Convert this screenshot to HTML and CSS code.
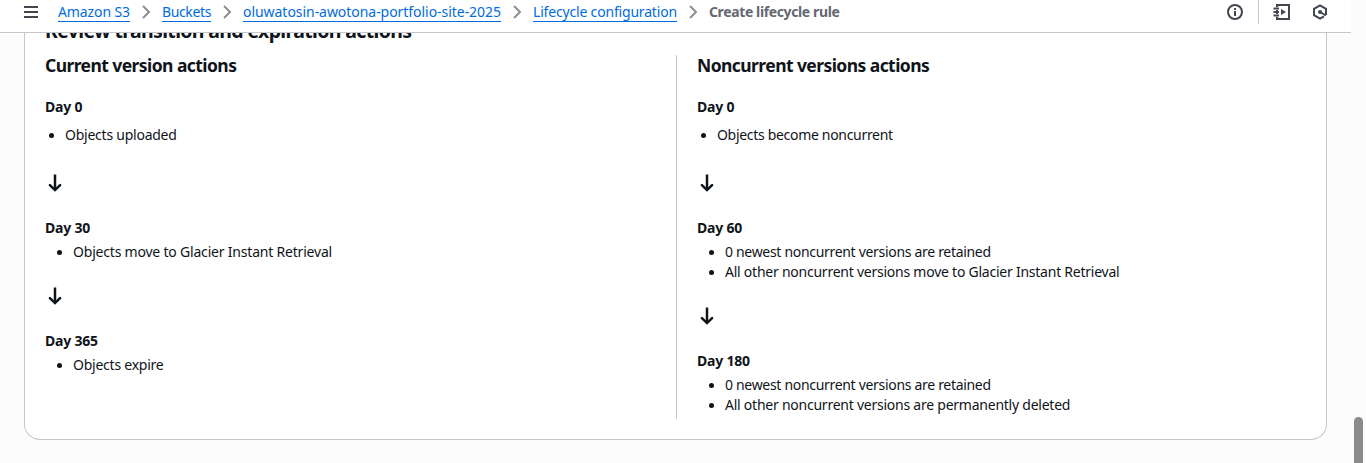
FILE: index.html
```html
<!DOCTYPE html>
<html lang="en">
<head>
<meta charset="utf-8">
<title>Create lifecycle rule</title>
<link rel="stylesheet" href="styles.css">
</head>
<body>
<header class="topbar">
  <svg class="menu" width="16" height="16" viewBox="0 0 16 16"><path d="M1 3h14M1 8h14M1 13h14"/></svg>
  <nav class="crumbs">
    <a class="c1">Amazon S3</a>
    <svg class="chev" width="16" height="16" viewBox="0 0 16 16"><path d="M5 2l6 6-6 6"/></svg>
    <a class="c2">Buckets</a>
    <svg class="chev" width="16" height="16" viewBox="0 0 16 16"><path d="M5 2l6 6-6 6"/></svg>
    <a class="c3">oluwatosin-awotona-portfolio-site-2025</a>
    <svg class="chev" width="16" height="16" viewBox="0 0 16 16"><path d="M5 2l6 6-6 6"/></svg>
    <a class="c4">Lifecycle configuration</a>
    <svg class="chev" width="16" height="16" viewBox="0 0 16 16"><path d="M5 2l6 6-6 6"/></svg>
    <span class="current">Create lifecycle rule</span>
  </nav>
  <div class="tools">
    <svg class="tool" width="16" height="16" viewBox="0 0 16 16"><circle cx="8" cy="8" r="7"/><path d="M8 7v5M8 4v2"/></svg>
    <span class="rule"></span>
    <svg class="tool tutorial" width="18" height="16" viewBox="0 0 18 16"><path d="M4 3V1h12v14H4v-2M4 6v4M0.500 4.500h5.500M0.500 8h5.500M0.500 11.500h5.500"/><path class="solid" d="M8 5v6l5-3z"/></svg>
    <svg class="tool" width="16" height="16" viewBox="0 0 16 16"><path d="M14 11V4.800L8 1.300 2 4.800v6.400L8 14.700l4-2.300M8 8l6 3.500"/><circle class="solid" cx="8" cy="8" r="2"/></svg>
  </div>
</header>
<div class="view">
<main class="main">
  <section class="card">
    <h2 class="title">Review transition and expiration actions</h2>
    <div class="columns">
      <div class="col">
        <h3 class="heading">Current version actions</h3>
        <h4 class="day">Day 0</h4>
        <ul class="list near"><li>Objects uploaded</li></ul>
        <svg class="arrow first" width="20" height="20" viewBox="0 0 20 20"><path d="M10 1.500v15.500"/><path class="head" d="M4.900 12.100L10 17.100l5.100-5"/></svg>
        <h4 class="day">Day 30</h4>
        <ul class="list"><li class="wide">Objects move to Glacier Instant Retrieval</li></ul>
        <svg class="arrow" width="20" height="20" viewBox="0 0 20 20"><path d="M10 1.500v15.500"/><path class="head" d="M4.900 12.100L10 17.100l5.100-5"/></svg>
        <h4 class="day">Day 365</h4>
        <ul class="list"><li>Objects expire</li></ul>
      </div>
      <div class="col">
        <h3 class="heading">Noncurrent versions actions</h3>
        <h4 class="day">Day 0</h4>
        <ul class="list near"><li class="tight">Objects become noncurrent</li></ul>
        <svg class="arrow first" width="20" height="20" viewBox="0 0 20 20"><path d="M10 1.500v15.500"/><path class="head" d="M4.900 12.100L10 17.100l5.100-5"/></svg>
        <h4 class="day">Day 60</h4>
        <ul class="list"><li class="tight">0 newest noncurrent versions are retained</li><li>All other noncurrent versions move to Glacier Instant Retrieval</li></ul>
        <svg class="arrow" width="20" height="20" viewBox="0 0 20 20"><path d="M10 1.500v15.500"/><path class="head" d="M4.900 12.100L10 17.100l5.100-5"/></svg>
        <h4 class="day">Day 180</h4>
        <ul class="list"><li class="tight">0 newest noncurrent versions are retained</li><li>All other noncurrent versions are permanently deleted</li></ul>
      </div>
    </div>
  </section>
</main>
<aside class="scroll"><div class="thumb"></div></aside>
</div>
</body>
</html>
```
FILE: styles.css
```css
* { box-sizing: border-box; }
body { margin: 0; height: 463px; overflow: hidden; background: #fcfcfd; color: #0f141a; font: 14px/20px "Noto Sans", sans-serif; }
h2, h3, h4, ul { margin: 0; padding: 0; }
svg { display: block; fill: none; flex: none; }
.topbar { position: relative; z-index: 1; width: 1351px; height: 33px; padding: 0 23px 8px; display: flex; align-items: center; background: #fff; border-bottom: 1px solid #c6c6cd; }
.menu { stroke: #424650; stroke-width: 2; }
.crumbs { display: flex; align-items: center; margin-left: 19px; white-space: nowrap; }
.crumbs a { color: #006ce0; line-height: 19px; border-bottom: 1px solid #006ce0; }
.c1 { width: 72px; letter-spacing: -0.1px; }
.c2 { width: 49px; letter-spacing: -0.37px; }
.c3 { width: 258px; letter-spacing: -0.045px; }
.c4 { width: 144px; letter-spacing: -0.18px; }
.chev { margin: 0 8px; stroke: #8c8c94; stroke-width: 2; }
.current { color: #656871; font-weight: 700; letter-spacing: -0.38px; }
.tools { display: flex; align-items: center; margin-left: auto; }
.tool { stroke: #424650; stroke-width: 2; }
.solid { fill: #424650; stroke: none; }
.rule { width: 1px; height: 24px; margin: 0 15px; background: #c6c6cd; }
.tutorial { margin: 0 21px 0 -1px; }
.view { display: flex; height: 430px; overflow: hidden; }
.main { width: 1351px; padding: 0 24px; }
.card { height: 431px; margin-top: -24px; padding: 11px 20px 20px; background: #fff; border: 1px solid #c6c6cd; border-top: 0; border-radius: 0 0 16px 16px; }
.title, .heading { line-height: 22px; font-weight: 700; white-space: nowrap; }
.title { margin-bottom: 13px; font-size: 19.5px; letter-spacing: -0.65px; }
.columns { display: grid; grid-template-columns: 631px 630px; height: 364px; }
.col + .col { border-left: 1px solid #c6c6cd; padding-left: 20px; }
.heading { margin-bottom: 22px; font-size: 17.500px; line-height: 20px; letter-spacing: -0.57px; }
.day { font-size: 14px; line-height: 20px; letter-spacing: -0.2px; }
.list { margin-top: 4px; padding-left: 12px; list-style: none; letter-spacing: -0.24px; }
.list li { display: flex; }
.list li::before { content: ""; width: 5px; height: 5px; margin: 8px 11px 0 0; border-radius: 50%; background: #0f141a; }
.list .tight { letter-spacing: -0.31px; }
.list .wide { letter-spacing: -0.2px; }
.near { margin-top: 8px; padding-left: 4px; }
.arrow { margin: 24px 0 25px; stroke: #0f141a; stroke-width: 2.500; }
.head { stroke-linecap: round; }
.first { margin: 28px 0 25px; }
.scroll { width: 15px; padding: 384px 3px 0; }
.thumb { height: 60px; border-radius: 5px; background: #8b8b8b; }
```
